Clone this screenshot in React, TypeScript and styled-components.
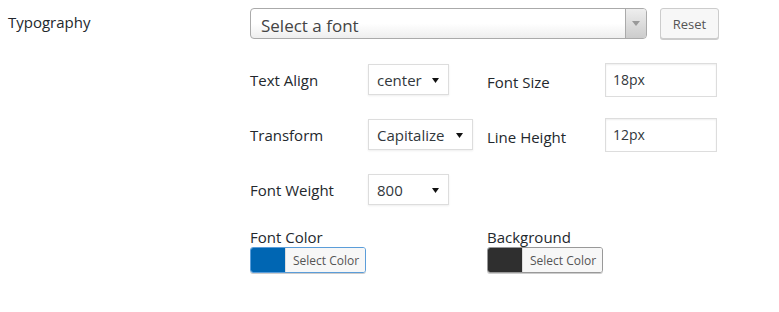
import styled, { createGlobalStyle } from "styled-components";

const GlobalStyle = createGlobalStyle`
  body {
    margin: 0;
    background: #ffffff;
    font-family: "Open Sans", "Noto Sans", sans-serif;
    color: #23282d;
  }
`;

function Arrow() {
  return (
    <svg width="7" height="5" viewBox="0 0 7 5">
      <path d="M0 0 L7 0 L3.5 5 Z" fill="#111" />
    </svg>
  );
}

function DropSelect({ value, width }: { value: string; width: number }) {
  return (
    <SelectBox $width={width}>
      <span>{value}</span>
      <Arrow />
    </SelectBox>
  );
}

function ColorPicker({ swatch, focused }: { swatch: string; focused?: boolean }) {
  return (
    <ColorButton $focused={focused}>
      <Swatch $color={swatch} />
      <ColorText>Select Color</ColorText>
    </ColorButton>
  );
}

export default function App() {
  return (
    <>
      <GlobalStyle />
      <Page>
        <SectionTitle>Typography</SectionTitle>
        <Body>
          <FontRow>
            <FontSelect>
              <FontText>Select a font</FontText>
              <FontArrow>
                <svg width="8" height="5" viewBox="0 0 8 5">
                  <path d="M0 0 L8 0 L4 5 Z" fill="#999" />
                </svg>
              </FontArrow>
            </FontSelect>
            <ResetButton>Reset</ResetButton>
          </FontRow>

          <Fields>
            <Label>Text Align</Label>
            <DropSelect value="center" width={81} />
            <Label $shift>Font Size</Label>
            <TextInput readOnly value="18px" />

            <Label>Transform</Label>
            <DropSelect value="Capitalize" width={105} />
            <Label $shift>Line Height</Label>
            <TextInput readOnly value="12px" />

            <Label>Font Weight</Label>
            <DropSelect value="800" width={81} />
          </Fields>

          <Colors>
            <ColorField>
              <ColorLabel>Font Color</ColorLabel>
              <ColorPicker swatch="#0066b3" focused />
            </ColorField>
            <ColorField>
              <ColorLabel>Background</ColorLabel>
              <ColorPicker swatch="#2f2f2f" />
            </ColorField>
          </Colors>
        </Body>
      </Page>
    </>
  );
}

const Page = styled.div`
  display: flex;
  width: 779px;
  height: 312px;
  padding: 8px 0 0 8px;
  box-sizing: border-box;
`;

const SectionTitle = styled.div`
  width: 242px;
  font-size: 15px;
  line-height: 20px;
  padding-top: 4px;
`;

const Body = styled.div`
  display: flex;
  flex-direction: column;
  width: 470px;
`;

const FontRow = styled.div`
  display: flex;
  align-items: flex-start;
  gap: 13px;
  height: 31px;
`;

const FontSelect = styled.div`
  display: flex;
  width: 397px;
  height: 31px;
  box-sizing: border-box;
  border: 1px solid #aaa;
  border-radius: 4px;
  background: linear-gradient(to bottom, #ffffff 50%, #eeeeee 100%);
  overflow: hidden;
`;

const FontText = styled.div`
  flex: 1;
  padding: 2px 0 0 10px;
  font-size: 17px;
  line-height: 29px;
  color: #444;
`;

const FontArrow = styled.div`
  display: flex;
  align-items: center;
  justify-content: center;
  width: 20px;
  border-left: 1px solid #aaa;
  background: linear-gradient(to bottom, #eeeeee 0%, #cccccc 100%);
`;

const ResetButton = styled.button`
  width: 59px;
  height: 31px;
  box-sizing: border-box;
  padding: 0;
  border: 1px solid #ccc;
  border-radius: 3px;
  background: #f7f7f7;
  box-shadow: 0 1px 0 #ccc;
  font-family: inherit;
  font-size: 13px;
  color: #555;
`;

const Fields = styled.div`
  display: grid;
  grid-template-columns: 118px 119px 118px 112px;
  grid-auto-rows: 55px;
  align-items: center;
  justify-items: start;
  margin-top: 13px;
`;

const Label = styled.div<{ $shift?: boolean }>`
  font-size: 15px;
  line-height: 20px;
  color: #23282d;
  padding-top: ${(p) => (p.$shift ? "5px" : "1px")};
`;

const SelectBox = styled.div<{ $width: number }>`
  display: flex;
  align-items: center;
  justify-content: space-between;
  width: ${(p) => p.$width}px;
  height: 31px;
  box-sizing: border-box;
  padding: 1px 9px 0 8px;
  border: 1px solid #ddd;
  background: #fff;
  box-shadow: 0 1px 2px rgba(0, 0, 0, 0.07);
  font-size: 15px;
  color: #32373c;
`;

const TextInput = styled.input`
  width: 112px;
  height: 34px;
  box-sizing: border-box;
  padding: 0 0 0 7px;
  border: 1px solid #ddd;
  background: #fff;
  box-shadow: inset 0 1px 2px rgba(0, 0, 0, 0.07);
  font-family: inherit;
  font-size: 14px;
  color: #32373c;
  outline: none;
`;

const Colors = styled.div`
  display: grid;
  grid-template-columns: 237px 237px;
  margin-top: 10px;
`;

const ColorField = styled.div`
  display: flex;
  flex-direction: column;
  align-items: flex-start;
`;

const ColorLabel = styled.div`
  font-size: 15px;
  line-height: 20px;
  color: #23282d;
`;

const ColorButton = styled.div<{ $focused?: boolean }>`
  display: flex;
  height: 26px;
  box-sizing: border-box;
  border: 1px solid ${(p) => (p.$focused ? "#5b9dd9" : "#999")};
  border-radius: 3px;
  box-shadow: 0 1px 0 #ccc;
  overflow: hidden;
`;

const Swatch = styled.div<{ $color: string }>`
  width: 34px;
  background: ${(p) => p.$color};
`;

const ColorText = styled.div`
  display: flex;
  align-items: center;
  padding: 0 6px 0 7px;
  border-left: 1px solid #ddd;
  background: #f7f7f7;
  font-size: 12px;
  color: #555;
`;
